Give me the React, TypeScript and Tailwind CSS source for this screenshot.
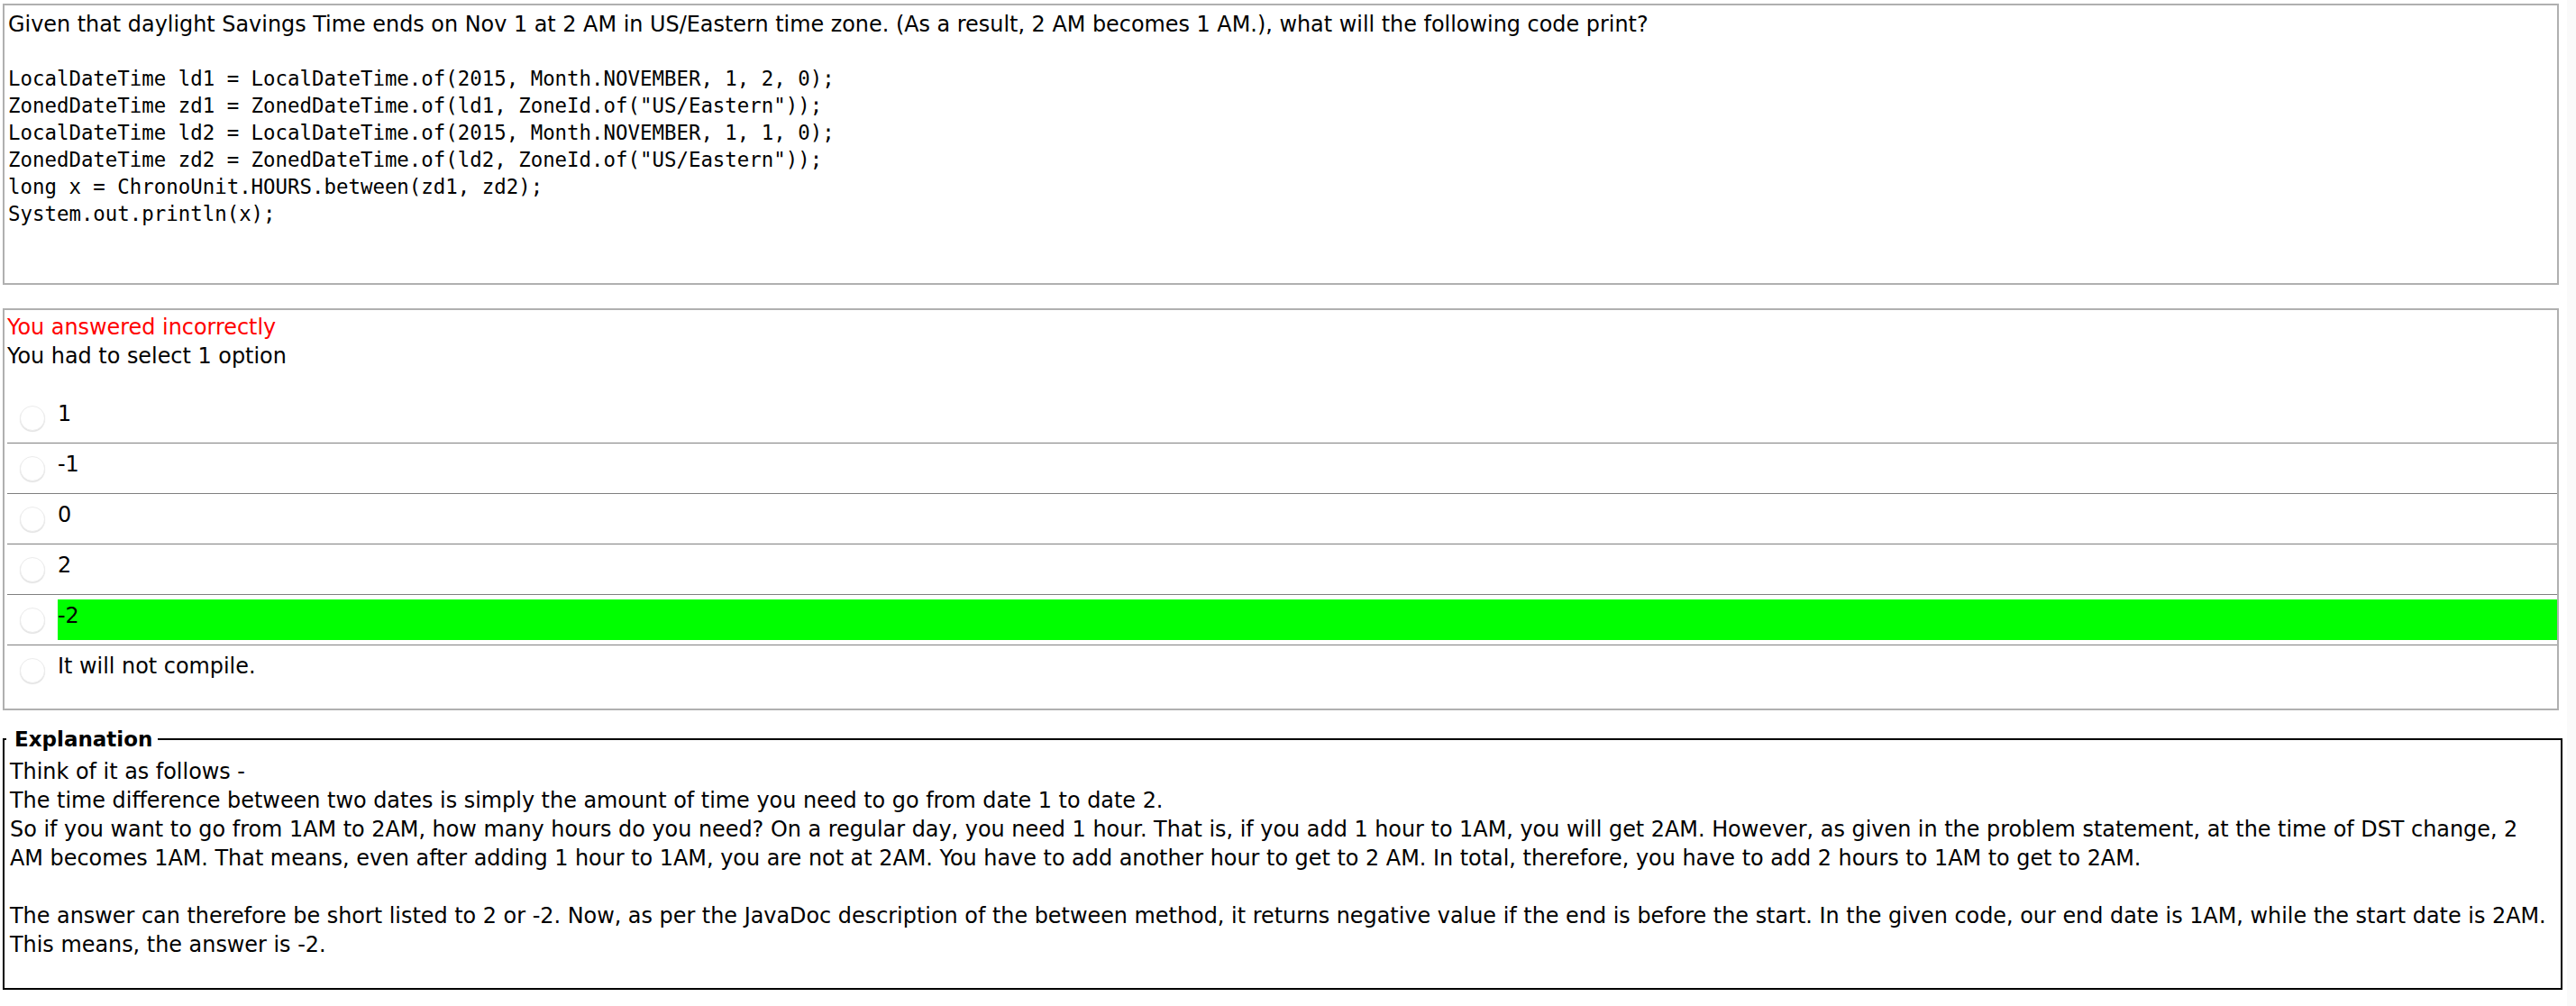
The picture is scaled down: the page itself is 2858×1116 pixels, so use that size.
import React from 'react';

const codeLines = [
  'LocalDateTime ld1 = LocalDateTime.of(2015, Month.NOVEMBER, 1, 2, 0);',
  'ZonedDateTime zd1 = ZonedDateTime.of(ld1, ZoneId.of("US/Eastern"));',
  'LocalDateTime ld2 = LocalDateTime.of(2015, Month.NOVEMBER, 1, 1, 0);',
  'ZonedDateTime zd2 = ZonedDateTime.of(ld2, ZoneId.of("US/Eastern"));',
  'long x = ChronoUnit.HOURS.between(zd1, zd2);',
  'System.out.println(x);',
];

const options = [
  { text: '1', correct: false },
  { text: '-1', correct: false },
  { text: '0', correct: false },
  { text: '2', correct: false },
  { text: '-2', correct: true },
  { text: 'It will not compile.', correct: false },
];

const Radio = () => (
  <div className="w-[28px] h-[28px] shrink-0 rounded-full bg-white border border-[#ececec] shadow-[0_1px_1px_rgba(0,0,0,0.12)]" />
);

export default function App() {
  return (
    <div className="flex w-[2858px] min-h-[1116px] bg-white text-black font-['DejaVu_Sans',Verdana,sans-serif] text-[23.9px]">
      <div className="flex-1 pl-[3px] pr-[5px] pt-[4px]">
        {/* Question */}
        <div className="mr-[4px] border-2 border-[#b0b0b0] pl-[4px] pt-[6px] pb-[2px] leading-[30px]">
          <div>
            Given that daylight Savings Time ends on Nov 1 at 2 AM in US/Eastern time zone. (As a result, 2 AM becomes 1 AM.), what will the following code print?
          </div>
          <div className="h-[30px]" />
          <div className="font-['DejaVu_Sans_Mono',monospace] text-[22.4px] whitespace-pre">
            {codeLines.map((line, i) => (
              <div key={i}>{line}</div>
            ))}
          </div>
          <div className="h-[60px]" />
        </div>

        {/* Answer */}
        <div className="mr-[4px] mt-[26px] border-2 border-[#b0b0b0] pl-[3px] pt-[3px] pb-[15px] leading-[32px]">
          <div className="text-[#ff0000]">You answered incorrectly</div>
          <div>You had to select 1 option</div>
          <div className="mt-[25px]">
            {options.map((opt, i) => (
              <div
                key={i}
                className={`flex items-center py-[5px] ${i < options.length - 1 ? 'border-b border-[#808080]' : ''}`}
              >
                <div className="ml-[14px]">
                  <Radio />
                </div>
                <div className={`ml-[14px] flex-1 h-[45px] pt-[2px] ${opt.correct ? 'bg-[#00ff00]' : ''}`}>
                  {opt.text}
                </div>
              </div>
            ))}
          </div>
        </div>

        {/* Explanation */}
        <fieldset className="mt-[16px] border-2 border-black pl-[2px] leading-[32px]">
          <legend className="pl-[9px] pr-[6px] font-bold text-[23px]">Explanation</legend>
          <div className="pl-[4px] pt-[4px]">
            Think of it as follows -
            <br />
            The time difference between two dates is simply the amount of time you need to go from date 1 to date 2.
            <br />
            So if you want to go from 1AM to 2AM, how many hours do you need? On a regular day, you need 1 hour. That is, if you add 1 hour to 1AM, you will get 2AM. However, as given in the problem statement, at the time of DST change, 2
            <br />
            AM becomes 1AM. That means, even after adding 1 hour to 1AM, you are not at 2AM. You have to add another hour to get to 2 AM. In total, therefore, you have to add 2 hours to 1AM to get to 2AM.
            <br />
            <br />
            The answer can therefore be short listed to 2 or -2. Now, as per the JavaDoc description of the between method, it returns negative value if the end is before the start. In the given code, our end date is 1AM, while the start date is 2AM.
            <br />
            This means, the answer is -2.
            <br />
            <br />
          </div>
        </fieldset>
      </div>
      <div className="w-[10px] shrink-0 bg-[#fafafa]" />
    </div>
  );
}
